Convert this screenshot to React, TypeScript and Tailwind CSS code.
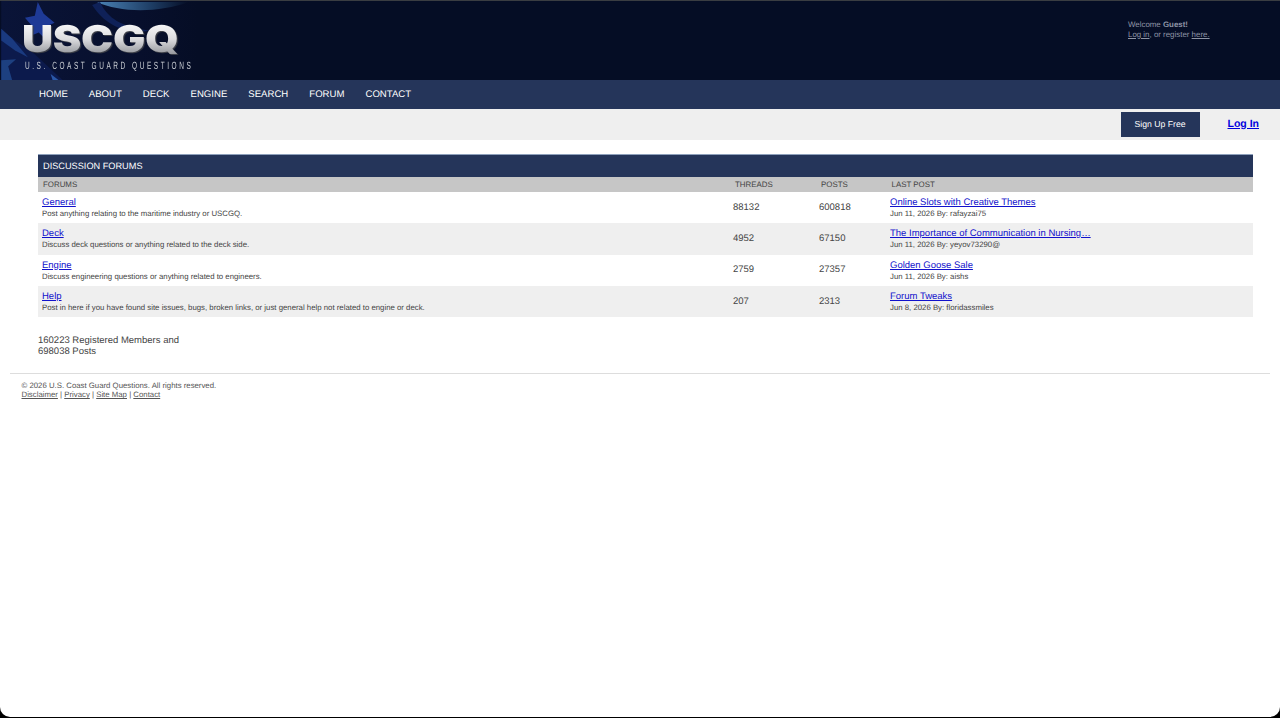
const NAV_ITEMS = ["HOME", "ABOUT", "DECK", "ENGINE", "SEARCH", "FORUM", "CONTACT"];

type ForumRow = {
  name: string;
  description: string;
  threads: number;
  posts: number;
  lastTitle: string;
  lastMeta: string;
};

const FORUMS: ForumRow[] = [
  {
    name: "General",
    description: "Post anything relating to the maritime industry or USCGQ.",
    threads: 88132,
    posts: 600818,
    lastTitle: "Online Slots with Creative Themes",
    lastMeta: "Jun 11, 2026 By: rafayzai75",
  },
  {
    name: "Deck",
    description: "Discuss deck questions or anything related to the deck side.",
    threads: 4952,
    posts: 67150,
    lastTitle: "The Importance of Communication in Nursing…",
    lastMeta: "Jun 11, 2026 By: yeyov73290@",
  },
  {
    name: "Engine",
    description: "Discuss engineering questions or anything related to engineers.",
    threads: 2759,
    posts: 27357,
    lastTitle: "Golden Goose Sale",
    lastMeta: "Jun 11, 2026 By: aishs",
  },
  {
    name: "Help",
    description:
      "Post in here if you have found site issues, bugs, broken links, or just general help not related to engine or deck.",
    threads: 207,
    posts: 2313,
    lastTitle: "Forum Tweaks",
    lastMeta: "Jun 8, 2026 By: floridassmiles",
  },
];

function LogoArt() {
  return (
    <svg className="absolute inset-0 h-full w-full" viewBox="0 0 200 80" aria-hidden="true">
      <defs>
        <linearGradient id="fade" x1="0" x2="1" y1="0" y2="0">
          <stop offset="0" stopColor="#0a1438" />
          <stop offset="0.7" stopColor="#070f2c" />
          <stop offset="1" stopColor="#050d25" />
        </linearGradient>
        <linearGradient id="streak" x1="0" x2="1" y1="0" y2="0">
          <stop offset="0" stopColor="#4a82b5" />
          <stop offset="0.6" stopColor="#1d3c63" />
          <stop offset="1" stopColor="#050d25" />
        </linearGradient>
      </defs>
      <rect width="200" height="80" fill="url(#fade)" />
      <path d="M0 30 L34 54 L62 80 L0 80 Z" fill="#0c1a4c" />
      <path d="M97 1 C120 12 160 12 190 1 Z" fill="url(#streak)" />
      <path d="M100 1 C108 18 122 26 150 30 C125 34 105 24 92 4 Z" fill="#0f2158" />
      <path d="M37 1 L43 13 L54 22 L45 26 L46 40 L38 32 L28 36 L31 25 L24 17 L34 15 Z" fill="#1e3a96" />
      <path d="M0 28 L11 38 L27 57 L14 50 L0 40 Z" fill="#1a3a80" />
      <path d="M0 60 L15 59 L7 66 L11 80 L0 80 Z" fill="#1d4080" />
      <path d="M50 74 L58 80 L52 80 Z" fill="#2a58a8" />
    </svg>
  );
}

function Logo() {
  return (
    <div className="relative h-[79px] w-[200px] overflow-hidden">
      <LogoArt />
      <div className="relative pl-[22px] pt-[19px]">
        <div className="h-[38px] w-max origin-left scale-x-[1.16] bg-gradient-to-b from-[#ffffff] via-[#dcdcdf] to-[#85888e] bg-clip-text font-['Inter',sans-serif] text-[37px] font-black leading-[38px] tracking-[-0.2px] text-transparent [filter:drop-shadow(1px_1px_0_#3c3f48)]">
          USCGQ
        </div>
        <div className="ml-[3px] mt-[3px] w-max origin-left scale-x-[0.62] whitespace-nowrap font-['Liberation_Sans',sans-serif] text-[10.5px] leading-[10px] tracking-[4.1px] text-[#c9cdd3]">
          U.S. COAST GUARD QUESTIONS
        </div>
      </div>
    </div>
  );
}

function App() {
  return (
    <div className="h-[718px] overflow-hidden bg-black font-['Liberation_Sans',sans-serif] antialiased [text-rendering:geometricPrecision]">
      <div className="h-[717px] overflow-hidden rounded-b-[10px] bg-white">
        <header className="flex h-[80px] justify-between border-t border-[#3a3d42] bg-[#050d25]">
          <Logo />
          <div className="w-[152px] pt-[19px] text-[7.9px] leading-[9.5px] text-[#8e94a5]">
            <p>
              Welcome <b>Guest!</b>
            </p>
            <p>
              <a href="#" className="underline">Log in</a>, or register{" "}
              <a href="#" className="underline">here.</a>
            </p>
          </div>
        </header>

        <nav className="flex h-[29px] items-center gap-[21px] bg-[#25355a] pl-[39px] pt-[1px] text-[9.6px] text-white">
          {NAV_ITEMS.map((item) => (
            <a key={item} href="#">{item}</a>
          ))}
        </nav>

        <div className="flex h-[31px] items-center justify-end bg-[#efefef] pr-[21px]">
          <a href="#" className="mr-[28px] flex h-[25px] w-[79px] items-center justify-center bg-[#25355a] text-[8.7px] text-white">
            Sign Up Free
          </a>
          <a href="#" className="text-[10.5px] font-bold text-[#0000dd] underline">Log In</a>
        </div>

        <main className="px-[38px] pt-[14px]">
          <div className="w-[1215px]">
            <div className="flex h-[23px] items-center border-t border-[#8ea0bb] bg-[#25355a] pl-[5px] pt-[1px] text-[9.2px] text-white">
              DISCUSSION FORUMS
            </div>
            <div className="grid h-[15px] grid-cols-[695px_86px_71px_1fr] items-center bg-[#c6c6c6] text-[7.9px] text-[#444444]">
              <span className="pl-[5px]">FORUMS</span>
              <span className="pl-[2px]">THREADS</span>
              <span className="pl-[2px]">POSTS</span>
              <span className="pl-[1.5px]">LAST POST</span>
            </div>
            {FORUMS.map((forum, i) => (
              <div
                key={forum.name}
                className={`grid h-[31.3px] grid-cols-[695px_86px_71px_1fr] items-center pt-[0.6px] text-[#444444] ${i % 2 === 1 ? "bg-[#efefef]" : "bg-white"}`}
              >
                <div className="pl-1">
                  <a href="#" className="block text-[9.5px] leading-[12px] text-[#1111cc] underline">{forum.name}</a>
                  <p className="text-[7.8px] leading-[10px]">{forum.description}</p>
                </div>
                <span className="text-[9.5px]">{forum.threads}</span>
                <span className="text-[9.5px]">{forum.posts}</span>
                <div>
                  <a href="#" className="block text-[9.5px] leading-[12px] text-[#1111cc] underline">{forum.lastTitle}</a>
                  <p className="text-[7.8px] leading-[10px]">{forum.lastMeta}</p>
                </div>
              </div>
            ))}
          </div>

          <p className="mt-[18px] w-[160px] text-[9.5px] leading-[11px] text-[#444444]">
            160223 Registered Members and 698038 Posts
          </p>
        </main>

        <footer className="mx-[10px] mt-[16px] border-t border-[#dddddd] pl-[11.5px] pt-[7px] text-[7.8px] leading-[9px] text-[#555555]">
          <p>© 2026 U.S. Coast Guard Questions. All rights reserved.</p>
          <p>
            <a href="#" className="underline">Disclaimer</a> | <a href="#" className="underline">Privacy</a> |{" "}
            <a href="#" className="underline">Site Map</a> | <a href="#" className="underline">Contact</a>
          </p>
        </footer>
      </div>
    </div>
  );
}

export default App;
